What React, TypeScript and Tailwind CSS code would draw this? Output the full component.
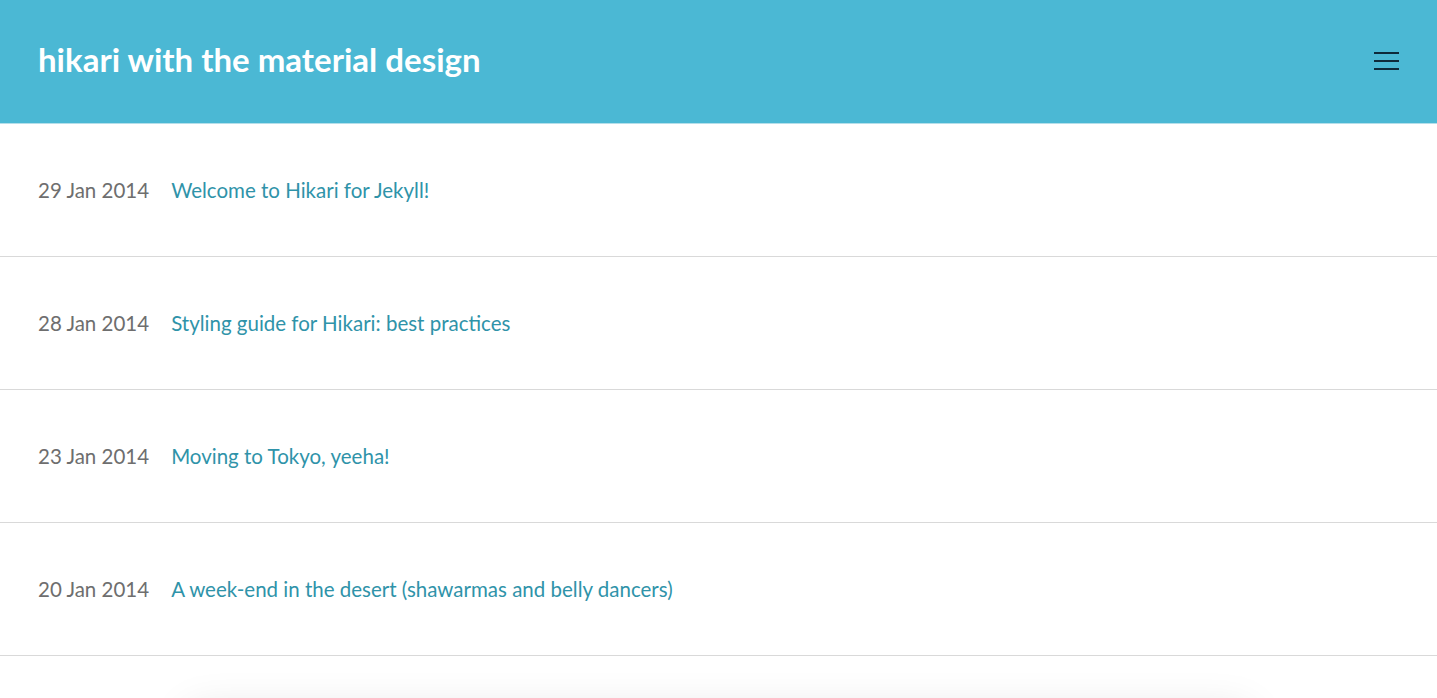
const posts = [
  { date: "29 Jan 2014", title: "Welcome to Hikari for Jekyll!" },
  { date: "28 Jan 2014", title: "Styling guide for Hikari: best practices" },
  { date: "23 Jan 2014", title: "Moving to Tokyo, yeeha!" },
  { date: "20 Jan 2014", title: "A week-end in the desert (shawarmas and belly dancers)" },
];

function Header() {
  return (
    <header className="flex h-[124px] items-center justify-between border-b border-[#b5dfea] bg-[#4bb8d4] px-[38px]">
      <h1 className="-mt-[4px] text-[33px] font-bold text-white">hikari with the material design</h1>
      <button className="-mt-[2px] flex w-[25px] flex-col gap-[6px]" aria-label="menu">
        <span className="h-[2px] w-full bg-[#0e2a3a]" />
        <span className="h-[2px] w-full bg-[#0e2a3a]" />
        <span className="h-[2px] w-full bg-[#0e2a3a]" />
      </button>
    </header>
  );
}

function App() {
  return (
    <div className="min-h-screen bg-white font-['Lato',sans-serif]">
      <Header />
      <ul>
        {posts.map((post) => (
          <li
            key={post.date}
            className="flex h-[133px] items-center gap-[22px] border-b border-[#d9d9d9] px-[38px] text-[20.5px]"
          >
            <span className="text-[#6e6e6e]">{post.date}</span>
            <a href="#" className="text-[#2f93a9]">
              {post.title}
            </a>
          </li>
        ))}
      </ul>
      <div className="mx-auto mt-[55px] h-[200px] w-[1060px] bg-white shadow-[0_0_40px_rgba(0,0,0,0.12)]" />
    </div>
  );
}

export default App;
